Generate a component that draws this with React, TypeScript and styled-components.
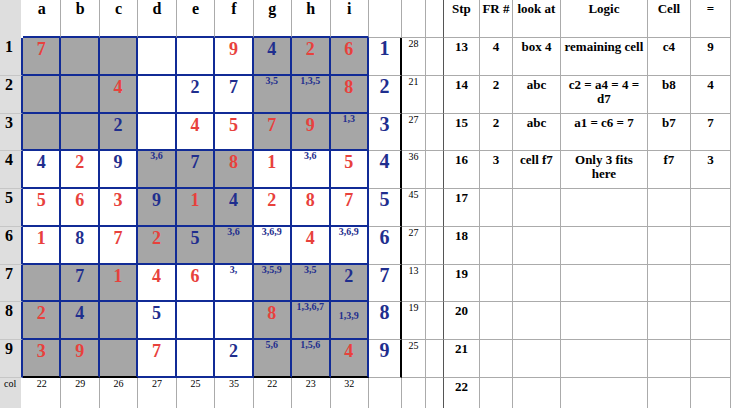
import React from 'react';
import styled, { createGlobalStyle } from 'styled-components';

const RED = '#e8413c';
const NAVY = '#1f2e8e';
const LINE_BLUE = '#112b96';
const FILL = '#a6a6a6';
const THIN = '#ababab';
const LABEL_BG = '#dedede';

const GlobalStyle = createGlobalStyle`
  html, body { margin: 0; padding: 0; background: #fff; }
  body { font-family: "Liberation Serif", "Times New Roman", serif; }
`;

const Sheet = styled.div`
  display: grid;
  grid-template-columns: 23px repeat(9, 38.44px) 33px 24px 18px 36px 33px 48px 87px 43px 40px;
  grid-template-rows: 38px repeat(9, 37.78px) 30px;
  width: 731px;
  height: 408px;
  overflow: hidden;
  font-family: "Liberation Serif", "Times New Roman", serif;
  font-weight: bold;
  color: #000;
  & > * { box-sizing: border-box; min-width: 0; overflow: hidden; }
`;

const Corner = styled.div<{ $foot?: boolean }>`
  background: ${LABEL_BG};
  background-clip: padding-box;
  border-right: 2px solid transparent;
  font-weight: normal;
  font-size: 10px;
  line-height: 12px;
  padding-left: 4px;
`;

const RowLabel = styled.div`
  background: ${LABEL_BG};
  border-right: 2px solid ${LINE_BLUE};
  border-bottom: 1px solid #c6c6c6;
  font-size: 16px;
  line-height: 18px;
  padding-left: 5px;
`;

const ColHeader = styled.div`
  border-right: 1px solid ${THIN};
  border-bottom: 2px solid ${LINE_BLUE};
  font-size: 16px;
  line-height: 17px;
  text-align: center;
`;

const Square = styled.div<{ $shaded: boolean; $blackBase: boolean }>`
  background: ${(p) => (p.$shaded ? FILL : '#fff')};
  border-right: 2px solid ${LINE_BLUE};
  border-bottom: 2px solid ${(p) => (p.$blackBase ? '#000' : LINE_BLUE)};
  text-align: center;
`;

const Digit = styled.span<{ $tone: 'red' | 'blue' }>`
  display: block;
  font-size: 18px;
  line-height: 22px;
  color: ${(p) => (p.$tone === 'red' ? RED : NAVY)};
`;

const Cands = styled.span<{ $drop: number }>`
  display: block;
  font-size: 10px;
  line-height: 10px;
  padding-top: ${(p) => p.$drop}px;
  color: ${NAVY};
  white-space: nowrap;
`;

const HouseLabel = styled.div<{ $head?: boolean }>`
  border-right: ${(p) => (p.$head ? `1px solid ${THIN}` : '2px solid #000')};
  border-bottom: 1px solid ${THIN};
  font-size: 20px;
  line-height: 21px;
  color: ${NAVY};
  text-align: center;
`;

const SumCell = styled.div<{ $foot?: boolean }>`
  border-right: 1px solid ${THIN};
  border-bottom: ${(p) => (p.$foot ? 'none' : `1px solid ${THIN}`)};
  font-weight: normal;
  font-size: 10px;
  line-height: ${(p) => (p.$foot ? '12px' : '11px')};
  text-align: center;
`;

const Spacer = styled.div<{ $foot?: boolean }>`
  border-right: 1px solid #555;
  border-bottom: ${(p) => (p.$foot ? 'none' : `1px solid ${THIN}`)};
`;

const StepCell = styled.div<{ $foot?: boolean }>`
  border-right: 1px solid ${THIN};
  border-bottom: ${(p) => (p.$foot ? 'none' : `1px solid ${THIN}`)};
  font-size: 13px;
  line-height: 14px;
  padding: 2px 2px 0;
  text-align: center;
`;

const grid: string[][] = [
  ['r7', '', '', '', '', 'r9', 'b4', 'r2', 'r6'],
  ['', '', 'r4', '', 'b2', 'b7', 'c3,5', 'c1,3,5', 'r8'],
  ['', '', 'b2', '', 'r4', 'r5', 'r7', 'r9', 'c1,3'],
  ['b4', 'r2', 'b9', 'c3,6', 'b7', 'r8', 'r1', 'c3,6', 'r5'],
  ['r5', 'r6', 'r3', 'b9', 'r1', 'b4', 'r2', 'r8', 'r7'],
  ['r1', 'b8', 'r7', 'r2', 'b5', 'c3,6', 'c3,6,9', 'r4', 'c3,6,9'],
  ['', 'b7', 'r1', 'r4', 'r6', 'c3,', 'c3,5,9', 'c3,5', 'b2'],
  ['r2', 'b4', '', 'b5', '', '', 'r8', 'c1,3,6,7', 'd1,3,9'],
  ['r3', 'r9', '', 'r7', '', 'b2', 'c5,6', 'c1,5,6', 'r4'],
];

const rowSums = ['28', '21', '27', '36', '45', '27', '13', '19', '25'];
const colSums = ['22', '29', '26', '27', '25', '35', '22', '23', '32'];
const letters = ['a', 'b', 'c', 'd', 'e', 'f', 'g', 'h', 'i'];
const stepHead = ['Stp', 'FR #', 'look at', 'Logic', 'Cell', '='];
const steps: string[][] = [
  ['13', '4', 'box 4', 'remaining cell', 'c4', '9'],
  ['14', '2', 'abc', 'c2 = a4 = 4 = d7', 'b8', '4'],
  ['15', '2', 'abc', 'a1 = c6 = 7', 'b7', '7'],
  ['16', '3', 'cell f7', 'Only 3 fits here', 'f7', '3'],
  ['17'],
  ['18'],
  ['19'],
  ['20'],
  ['21'],
];

function renderEntry(v: string) {
  if (!v) return null;
  const kind = v[0];
  const text = v.slice(1);
  if (kind === 'r') return <Digit $tone="red">{text}</Digit>;
  if (kind === 'b') return <Digit $tone="blue">{text}</Digit>;
  if (kind === 'd') return <Cands $drop={9}>{text}</Cands>;
  return <Cands $drop={0}>{text}</Cands>;
}

export default function App() {
  const cells: React.ReactNode[] = [];

  cells.push(<Corner key="corner" />);
  letters.forEach((l) => cells.push(<ColHeader key={`h-${l}`}>{l}</ColHeader>));
  cells.push(<HouseLabel key="hl" $head />);
  cells.push(<SumCell key="hs" />);
  cells.push(<Spacer key="hsp" />);
  stepHead.forEach((t) => cells.push(<StepCell key={`sh-${t}`}>{t}</StepCell>));

  grid.forEach((row, r) => {
    cells.push(<RowLabel key={`rl-${r}`}>{r + 1}</RowLabel>);
    row.forEach((v, c) => {
      const box = Math.floor(r / 3) * 3 + Math.floor(c / 3);
      const shaded = box % 2 === 0;
      cells.push(
        <Square key={`sq-${r}-${c}`} $shaded={shaded} $blackBase={r === 8 && shaded}>
          {renderEntry(v)}
        </Square>
      );
    });
    cells.push(<HouseLabel key={`hn-${r}`}>{r + 1}</HouseLabel>);
    cells.push(<SumCell key={`rs-${r}`}>{rowSums[r]}</SumCell>);
    cells.push(<Spacer key={`sp-${r}`} />);
    for (let k = 0; k < 6; k++) {
      cells.push(<StepCell key={`st-${r}-${k}`}>{steps[r][k] ?? ''}</StepCell>);
    }
  });

  cells.push(<Corner key="foot-corner" $foot>col</Corner>);
  colSums.forEach((s, i) => cells.push(<SumCell key={`cs-${i}`} $foot>{s}</SumCell>));
  cells.push(<SumCell key="f-hl" $foot />);
  cells.push(<SumCell key="f-rs" $foot />);
  cells.push(<Spacer key="f-sp" $foot />);
  for (let k = 0; k < 6; k++) {
    cells.push(<StepCell key={`f-st-${k}`} $foot>{k === 0 ? '22' : ''}</StepCell>);
  }

  return (
    <>
      <GlobalStyle />
      <Sheet>{cells}</Sheet>
    </>
  );
}
